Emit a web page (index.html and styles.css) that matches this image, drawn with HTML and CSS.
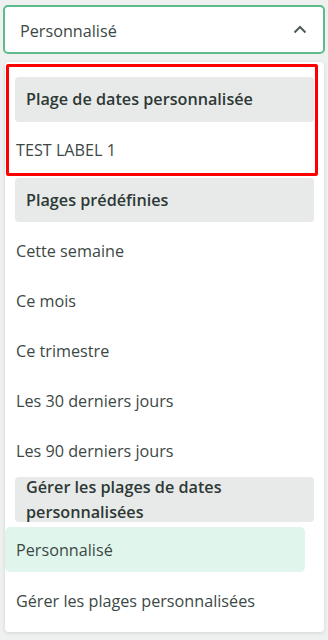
FILE: index.html
```html
<!DOCTYPE html>
<html lang="fr">
<head>
<meta charset="utf-8">
<link rel="stylesheet" href="styles.css">
</head>
<body>
<div class="page">
  <div class="select">
    <span class="select-value">Personnalisé</span>
    <svg class="chevron" width="14" height="9" viewBox="0 0 14 9"><path d="M1.5 7.5 L7 2 L12.5 7.5" fill="none" stroke="#4d5c57" stroke-width="2"/></svg>
  </div>
  <div class="panel">
    <div class="highlight"></div>
    <div class="group g1">Plage de dates personnalisée</div>
    <div class="item i-test">TEST LABEL 1</div>
    <div class="group g2">Plages prédéfinies</div>
    <div class="item">Cette semaine</div>
    <div class="item">Ce mois</div>
    <div class="item">Ce trimestre</div>
    <div class="item">Les 30 derniers jours</div>
    <div class="item">Les 90 derniers jours</div>
    <div class="group g3">Gérer les plages de dates personnalisées</div>
    <div class="item selected">Personnalisé</div>
    <div class="item">Gérer les plages personnalisées</div>
  </div>
</div>
</body>
</html>
```
FILE: styles.css
```css
html, body {
  margin: 0;
  padding: 0;
  background: #eff1f0;
}
body {
  width: 328px;
  height: 640px;
  overflow: hidden;
  font-family: "Open Sans", "Noto Sans", sans-serif;
  font-size: 16.2px;
  color: #3c4845;
}
.page {
  padding: 5px 3px 0 3px;
}
.select {
  height: 45px;
  border: 2px solid #5dbb8c;
  border-radius: 5px;
  background: #fff;
  display: flex;
  align-items: center;
  justify-content: space-between;
  padding: 0 16px 0 15px;
}
.select-value {
  position: relative;
  top: 1px;
}
.chevron {
  display: block;
}
.panel {
  position: relative;
  margin: 8px 1px 0 2px;
  height: 570px;
  box-sizing: border-box;
  background: #fff;
  border-radius: 4px;
  box-shadow: 0 1px 4px rgba(0,0,0,0.12);
  padding: 15px 0 6px 0;
  display: flex;
  flex-direction: column;
}
.highlight {
  position: absolute;
  left: 1px;
  top: 2px;
  width: 306px;
  height: 106px;
  border: 3px solid #ff0000;
  border-radius: 2px;
}
.group {
  flex: none;
  height: 45px;
  margin: 0 10px;
  padding: 0 11px;
  background: #e8eae9;
  border-radius: 4px;
  display: flex;
  align-items: center;
  font-weight: 600;
  line-height: 25px;
  color: #2e3936;
}
.g1 { margin-bottom: 3px; }
.g2 { height: 44px; margin-top: 3px; margin-bottom: 4px; }
.g3 { margin-top: 1px; margin-bottom: 5px; }
.item {
  flex: none;
  height: 50px;
  display: flex;
  align-items: center;
  padding: 0 11px;
}
.item.selected {
  height: 45px;
  margin-right: 19px;
  margin-bottom: 4px;
  background: #e0f6ec;
  border-radius: 5px;
}
```
